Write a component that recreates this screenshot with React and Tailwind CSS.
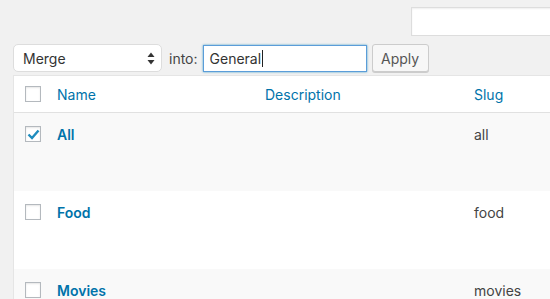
import React from 'react';

const rows = [
    { name: 'All', slug: 'all', checked: true, alt: true },
    { name: 'Food', slug: 'food', checked: false, alt: false },
    { name: 'Movies', slug: 'movies', checked: false, alt: true },
];

function Checkbox({ checked }) {
    return (
        <span className="flex h-4 w-4 items-center justify-center border border-[#b4b9be] bg-white shadow-[inset_0_1px_2px_rgba(0,0,0,0.1)]">
            {checked && (
                <svg width="13" height="11" viewBox="0 0 13 11" className="mt-px">
                    <path d="M1.5 5.5 L5 9 L11.5 1.5" fill="none" stroke="#1e8cbe" strokeWidth="2.4" />
                </svg>
            )}
        </span>
    );
}

export default function App() {
    return (
        <div className="h-[299px] w-[550px] overflow-hidden bg-[#f1f1f1] pl-[13px] font-['Inter',sans-serif] text-[14px]">
            <div className="flex justify-end pt-[7px]">
                <div className="-mr-2 h-[29px] w-[147px] border border-[#dddddd] bg-white shadow-[inset_0_1px_2px_rgba(0,0,0,0.07)]" />
            </div>

            <div className="mt-[8px] flex items-center">
                <div className="flex h-[28px] w-[149px] items-center justify-between rounded-[5px] border border-[#dddddd] bg-white pl-[9px] pr-[6px] text-[#333]">
                    <span>Merge</span>
                    <svg width="8" height="13" viewBox="0 0 8 13">
                        <path d="M4 0.5 L7.5 5 H0.5 Z" fill="#333" />
                        <path d="M4 12.5 L7.5 8 H0.5 Z" fill="#333" />
                    </svg>
                </div>
                <span className="ml-[7px] text-[#444]">into:</span>
                <div className="ml-[5px] flex h-[27px] w-[164px] items-center border border-[#5b9dd9] bg-white pl-[6px] text-[#333] shadow-[0_0_2px_rgba(30,140,190,0.8)]">
                    <span>General</span>
                    <span className="ml-px h-[17px] w-px bg-[#222]" />
                </div>
                <button className="ml-[5px] h-[28px] w-[57px] rounded-[3px] border border-[#cccccc] bg-[#f7f7f7] text-[14px] text-[#555] shadow-[0_1px_0_#cccccc]">
                    Apply
                </button>
            </div>

            <div className="mt-[3px] w-[560px] border border-[#e5e5e5] bg-white">
                <div className="grid h-[37px] grid-cols-[43px_208px_209px_1fr] items-center border-b border-[#e1e1e1] text-[#0073aa]">
                    <div className="pl-[11px]">
                        <Checkbox />
                    </div>
                    <span>Name</span>
                    <span>Description</span>
                    <span>Slug</span>
                </div>
                {rows.map((r) => (
                    <div
                        key={r.slug}
                        className={`grid h-[78px] grid-cols-[43px_208px_209px_1fr] items-start pt-[12px] ${r.alt ? 'bg-[#f9f9f9]' : 'bg-white'}`}
                    >
                        <div className="pl-[11px] pt-px">
                            <Checkbox checked={r.checked} />
                        </div>
                        <span className="font-semibold leading-[20px] text-[#0073aa]">{r.name}</span>
                        <span />
                        <span className="leading-[20px] text-[#444]">{r.slug}</span>
                    </div>
                ))}
            </div>
        </div>
    );
}
